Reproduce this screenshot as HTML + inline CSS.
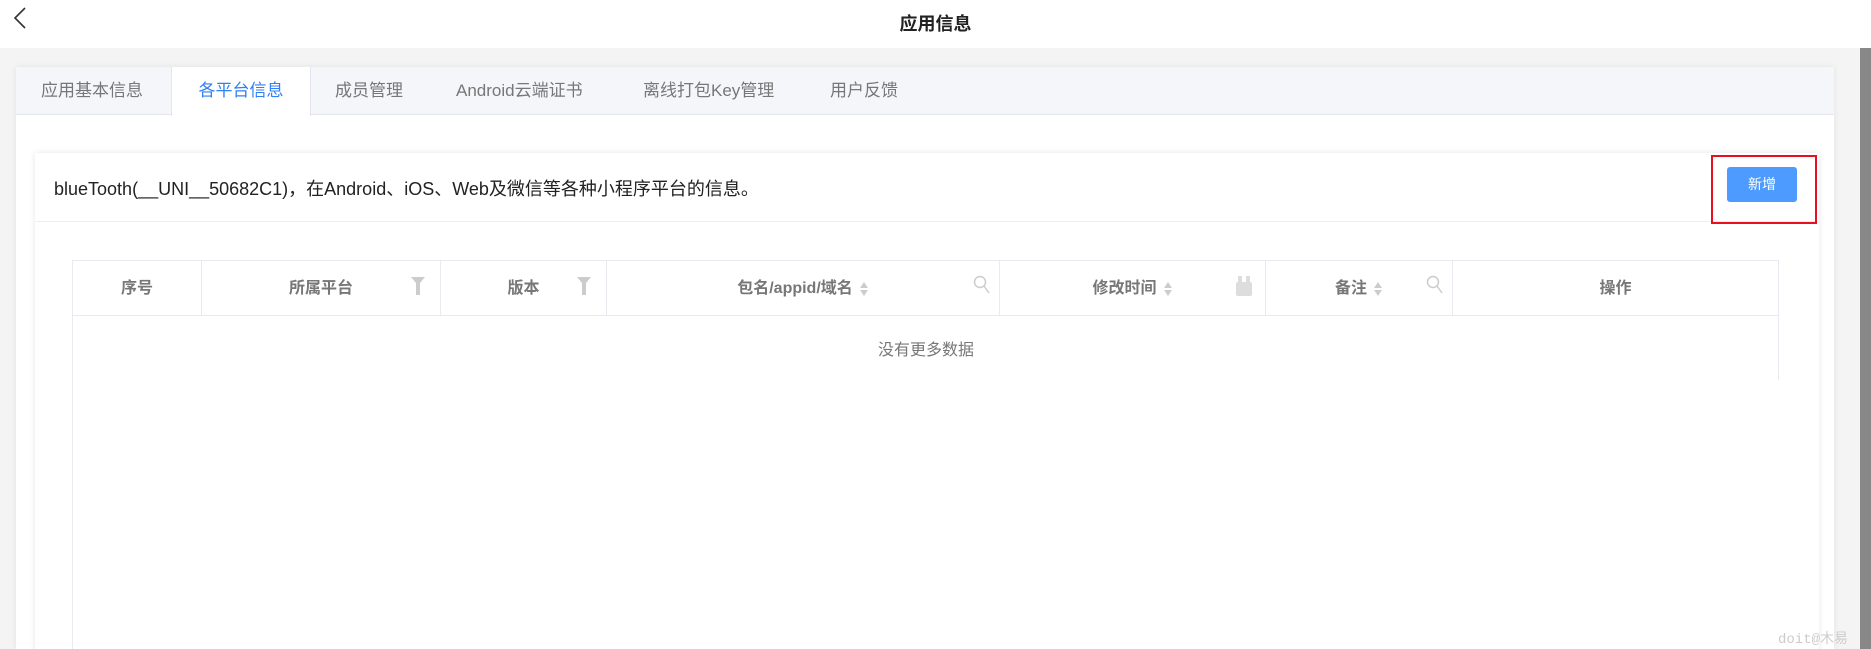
<!DOCTYPE html>
<html style="width:1871px;height:649px;overflow:hidden"><head><meta charset="utf-8"><style>
*{margin:0;padding:0;box-sizing:border-box}
body{width:1871px;height:649px;overflow:hidden;background:#f4f4f4;font-family:"Liberation Sans","Noto Sans CJK SC",sans-serif;position:relative}
.top{position:absolute;left:0;top:0;width:1871px;height:48px;background:#fff}
.top .t{position:absolute;left:0;width:1871px;top:10px;text-align:center;font-size:18px;font-weight:bold;color:#222}
.scroll{position:absolute;left:1860px;top:48px;width:11px;height:601px;background:#888}
.panel{position:absolute;left:16px;top:67px;width:1818px;height:582px;background:#fff;box-shadow:0 0 6px rgba(0,0,0,.08);overflow:hidden}
.tabs{position:absolute;left:0;top:0;width:100%;height:48px;background:#f5f6fa;border-bottom:1px solid #e4e6ef}
.tab{position:absolute;top:0;height:48px;line-height:47px;font-size:17px;color:#777}
.tab.a{background:#fff;color:#2f7ff5;border-left:1px solid #e4e6ef;border-right:1px solid #e4e6ef;height:49px;text-align:center}
.card{position:absolute;left:19px;top:86px;width:1784px;height:500px;background:#fff;box-shadow:0 0 6px rgba(0,0,0,.1)}
.hd{position:absolute;left:0;top:0;width:100%;height:69px;border-bottom:1px solid #eee}
.hd .tt{position:absolute;left:19px;top:22px;font-size:18px;color:#222}
.btn{position:absolute;left:1692px;top:14px;width:70px;height:35px;background:#4d9bff;border-radius:3px;color:#fff;font-size:14px;text-align:center;line-height:35px}
.red{position:absolute;left:1676px;top:2px;width:106px;height:69px;border:2px solid #e8101f}
.tbl{position:absolute;left:37px;top:107px;width:1706px;height:400px;border-left:1px solid #e8eaf0}
.th{position:absolute;top:0;height:56px;border-top:1px solid #e8eaf0;border-bottom:1px solid #e8eaf0;border-right:1px solid #e8eaf0;font-size:16px;font-weight:bold;color:#777;text-align:center;line-height:56px}
.rb{position:absolute;left:1705px;top:56px;width:1px;height:64px;background:#e8eaf0}
.empty{position:absolute;left:0;top:76px;width:1706px;text-align:center;font-size:16px;color:#777}
.ic{position:absolute;top:16px}
.so{display:inline-block;vertical-align:middle;margin-left:6px}
.wm{position:absolute;left:1778px;top:628px;font-size:14px;color:#ccc;font-family:"Liberation Mono","Noto Sans CJK SC",monospace}
</style></head><body>
<div class="top">
<svg style="position:absolute;left:12px;top:6px" width="16" height="24" viewBox="0 0 16 24"><path d="M13 2 L3 12 L13 22" fill="none" stroke="#333" stroke-width="1.6"/></svg>
<div class="t">应用信息</div></div>
<div class="scroll"></div>
<div class="panel">
<div class="tabs">
<div class="tab" style="left:25px">应用基本信息</div>
<div class="tab a" style="left:155px;width:140px">各平台信息</div>
<div class="tab" style="left:319px">成员管理</div>
<div class="tab" style="left:440px">Android云端证书</div>
<div class="tab" style="left:627px">离线打包Key管理</div>
<div class="tab" style="left:814px">用户反馈</div>
</div>
<div class="card">
<div class="hd"><div class="tt">blueTooth(__UNI__50682C1)，在Android、iOS、Web及微信等各种小程序平台的信息。</div>
<div class="btn">新增</div><div class="red"></div></div>
<div class="tbl">
<div class="th" style="left:0;width:129px">序号</div>
<div class="th" style="left:129px;width:239px">所属平台<svg class="ic" style="right:14px;top:15px" width="16" height="20"><path d="M1 1H15L10 7V19H6V7Z" fill="#ccc"/></svg></div>
<div class="th" style="left:368px;width:166px">版本<svg class="ic" style="right:14px;top:15px" width="16" height="20"><path d="M1 1H15L10 7V19H6V7Z" fill="#ccc"/></svg></div>
<div class="th" style="left:534px;width:393px">包名/appid/域名<svg class="so" width="10" height="16"><path d="M5 1L9 7H1Z M5 15L9 9H1Z" fill="#ccc"/></svg><svg class="ic" style="right:8px;top:14px" width="18" height="20"><circle cx="7" cy="7" r="5.5" fill="none" stroke="#ccc" stroke-width="1.5"/><path d="M11 11 L16 18" stroke="#ccc" stroke-width="1.5"/></svg></div>
<div class="th" style="left:927px;width:266px">修改时间<svg class="so" width="10" height="16"><path d="M5 1L9 7H1Z M5 15L9 9H1Z" fill="#ccc"/></svg><svg class="ic" style="right:12px;top:14px" width="18" height="22"><rect x="1" y="7" width="16" height="14" rx="2" fill="#ddd"/><rect x="3" y="1" width="4" height="7" fill="#ddd"/><rect x="11" y="1" width="4" height="7" fill="#ddd"/></svg></div>
<div class="th" style="left:1193px;width:187px">备注<svg class="so" width="10" height="16"><path d="M5 1L9 7H1Z M5 15L9 9H1Z" fill="#ccc"/></svg><svg class="ic" style="right:8px;top:14px" width="18" height="20"><circle cx="7" cy="7" r="5.5" fill="none" stroke="#ccc" stroke-width="1.5"/><path d="M11 11 L16 18" stroke="#ccc" stroke-width="1.5"/></svg></div>
<div class="th" style="left:1380px;width:326px">操作</div>
<div class="rb"></div>
<div class="empty">没有更多数据</div>
</div>
</div>
</div>
<div class="wm">doit@木易</div>
</body></html>
